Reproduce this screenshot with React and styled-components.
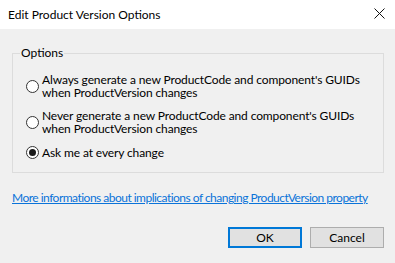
import React from "react";
import styled, { createGlobalStyle } from "styled-components";

const Global = createGlobalStyle`
  html, body {
    margin: 0;
    padding: 0;
    background: #f0f0f0;
  }
  body {
    font-family: Lato, "Liberation Sans", sans-serif;
    font-size: 12px;
    color: #000;
  }
`

const Dialog = styled.div`
  width: 395px;
  height: 263px;
  display: flex;
  flex-direction: column;
  background: #f0f0f0;
  overflow: hidden;
`

const TitleBar = styled.div`
  height: 29px;
  background: #fff;
  display: flex;
  align-items: center;
  justify-content: space-between;
  padding: 0 10px 0 8px;
  flex-shrink: 0;
`

const Title = styled.span`
  font-size: 12px;
  line-height: 16px;
`

const CloseButton = styled.div`
  width: 11px;
  height: 11px;
  display: flex;
  margin-top: -2px;
`

const Body = styled.div`
  display: flex;
  flex-direction: column;
  padding: 17px 11px 0 12px;
`

const Group = styled.fieldset`
  margin: 0;
  padding: 13px 12px 13px 13px;
  border: 1px solid #dcdcdc;
  min-width: 0;
  display: flex;
  flex-direction: column;
  gap: 10px;
`

const Legend = styled.legend`
  padding: 0 1px;
  margin-left: -6px;
  font-size: 12px;
  line-height: 14px;
`

const Option = styled.label`
  display: flex;
  align-items: center;
  gap: 3px;
  font-size: 12px;
  line-height: 13px;
  letter-spacing: -0.12px;
  white-space: nowrap;
  margin-top: ${p => p.$extra || 0}px;
`

const Dot = styled.span`
  width: 11px;
  height: 11px;
  border-radius: 50%;
  border: 1px solid #333;
  background: #fff;
  flex-shrink: 0;
  display: flex;
  align-items: center;
  justify-content: center;
  &::after {
    content: "";
    width: 7px;
    height: 7px;
    border-radius: 50%;
    background: ${p => (p.$checked ? "#1a1a1a" : "transparent")};
  }
`

const MoreLink = styled.a`
  margin-top: 18px;
  color: #0a73d9;
  text-decoration: underline;
  font-size: 12px;
  line-height: 14px;
  letter-spacing: -0.52px;
  white-space: nowrap;
  cursor: pointer;
`

const Buttons = styled.div`
  display: flex;
  justify-content: flex-end;
  gap: 8px;
  margin-top: 22px;
`

const Button = styled.button`
  width: 74px;
  height: 21px;
  box-sizing: border-box;
  background: #e1e1e1;
  border: ${p => (p.$default ? "2px solid #0078d7" : "1px solid #adadad")};
  font-family: inherit;
  font-size: 12px;
  color: #000;
  padding: 0;
`

const options = [
  { lines: ["Always generate a new ProductCode and component's GUIDs", "when ProductVersion changes"] },
  { lines: ["Never generate a new ProductCode and component's GUIDs", "when ProductVersion changes"] },
  { lines: ["Ask me at every change"], checked: true, extra: 1 },
]

export default function App() {
  return (
    <>
      <Global />
      <Dialog>
        <TitleBar>
          <Title>Edit Product Version Options</Title>
          <CloseButton>
            <svg width="11" height="11" viewBox="0 0 11 11">
              <path d="M0.5 0.5 L10.5 10.5 M10.5 0.5 L0.5 10.5" stroke="#111" strokeWidth="1" fill="none" />
            </svg>
          </CloseButton>
        </TitleBar>
        <Body>
          <Group>
            <Legend>Options</Legend>
            {options.map((o, i) => (
              <Option key={i} $extra={o.extra}>
                <Dot $checked={o.checked} />
                <span>
                  {o.lines.map((l, j) => (
                    <div key={j}>{l}</div>
                  ))}
                </span>
              </Option>
            ))}
          </Group>
          <MoreLink>More informations about implications of changing ProductVersion property</MoreLink>
          <Buttons>
            <Button $default>OK</Button>
            <Button>Cancel</Button>
          </Buttons>
        </Body>
      </Dialog>
    </>
  );
}
